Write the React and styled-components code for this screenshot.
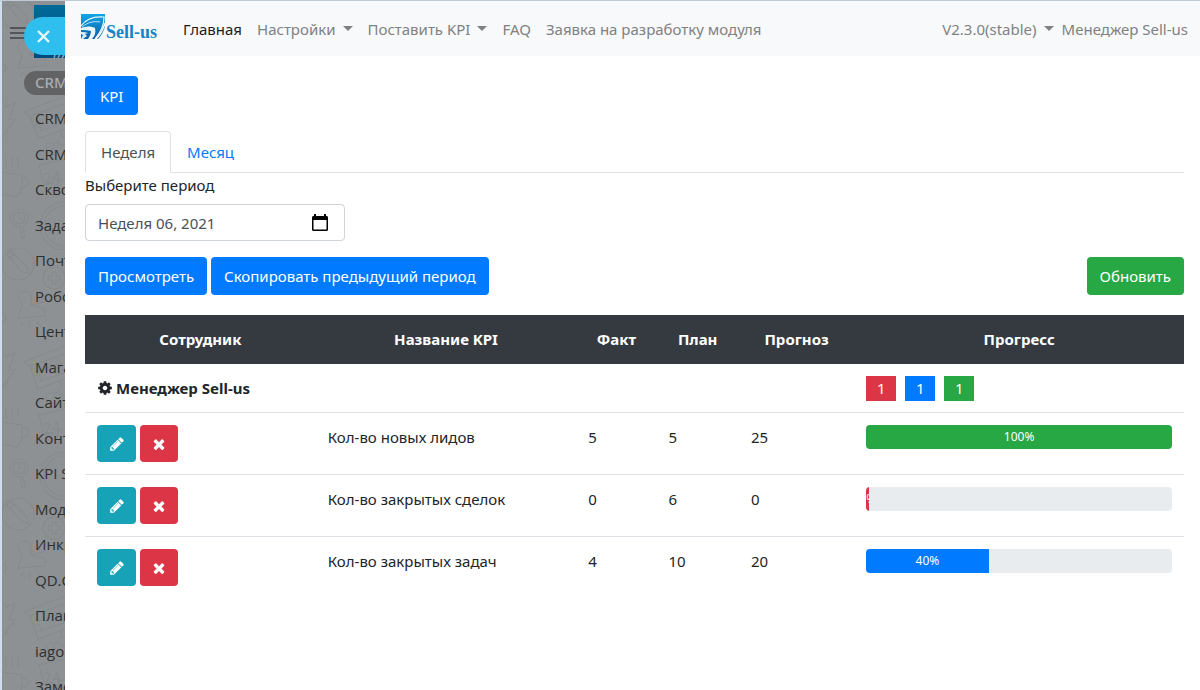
import React, { useState } from 'react';
import styled, { createGlobalStyle } from 'styled-components';

const GlobalStyle = createGlobalStyle`
    *, *::before, *::after {
        box-sizing: border-box;
    }
    body {
        margin: 0;
        font-family: 'Noto Sans', 'Open Sans', sans-serif;
        font-size: 15px;
        line-height: 24px;
        color: #212529;
        background: #fff;
    }
    button, input {
        font: inherit;
    }
    a {
        color: inherit;
        text-decoration: none;
    }
    ul {
        margin: 0;
        padding: 0;
        list-style: none;
    }
`

const colors = {
    primary: '#007bff',
    success: '#28a745',
    danger: '#dc3545',
    info: '#17a2b8',
}

const Page = styled.div`
    display: flex;
    height: 100vh;
    overflow: hidden;
    border-top: 1px solid #c0cad6;
`

/* ---------- left menu ---------- */

const Sidebar = styled.aside`
    position: relative;
    display: flex;
    flex-direction: column;
    flex: 0 0 65px;
    overflow: hidden;
    border-left: 2px solid #cfdeec;
    background: #8e9193;
    color: #2c2f31;
    white-space: nowrap;
`

const Doodles = styled.svg`
    position: absolute;
    inset: 0;
    width: 100%;
    height: 100%;
`

const SidebarHead = styled.div`
    position: relative;
    display: flex;
    align-items: flex-start;
    gap: 8px;
    height: 57px;
    padding: 4px 0 0 8px;
`

const MenuBtn = styled.button`
    flex: none;
    width: 16px;
    height: 12px;
    margin-top: 22px;
    padding: 0;
    border: solid #50565c;
    border-width: 2px 0;
    background: linear-gradient(#50565c, #50565c) center / 100% 2px no-repeat;
`

const CompanyTile = styled.div`
    display: flex;
    align-items: flex-end;
    flex: none;
    width: 120px;
    height: 53px;
    overflow: hidden;
    padding-left: 18px;
    background: linear-gradient(#006b99, #004a7c);
`

const CloseBtn = styled.button`
    position: absolute;
    top: 16px;
    left: 22px;
    width: 60px;
    height: 38px;
    padding: 0 0 0 13px;
    border: 0;
    border-radius: 19px 0 0 19px;
    background: #2fbfee;
    color: #e6f7fd;
    text-align: left;
    svg {
        display: block;
    }
`

const MenuActive = styled.a`
    position: relative;
    flex: none;
    width: 200px;
    height: 24px;
    margin: 13px 0 0 22px;
    padding-left: 11px;
    border-radius: 12px;
    background: #616364;
    color: #abadae;
    font-weight: 500;
    line-height: 23px;
`

const MenuList = styled.ul`
    position: relative;
    display: flex;
    flex: 1;
    flex-direction: column;
    justify-content: space-between;
    margin: 11px 0 -8px 33px;
    font-family: 'Open Sans', 'Noto Sans', sans-serif;
    font-size: 15px;
`

/* ---------- navbar ---------- */

const Panel = styled.div`
    flex: 1;
    min-width: 0;
    background: #fff;
`

const Navbar = styled.nav`
    display: flex;
    align-items: center;
    height: 55px;
    padding: 0 12px 0 16px;
    background: #f8f9fa;
    color: #808182;
    white-space: nowrap;
`

const Brand = styled.a`
    display: flex;
    align-items: flex-end;
    gap: 1px;
    margin-right: 26px;
    padding-bottom: 4px;
    color: #1583c5;
    font-family: 'Liberation Serif', serif;
    font-size: 18px;
    font-weight: 700;
    line-height: 13px;
`

const NavGroup = styled.div`
    display: flex;
    align-items: center;
    gap: ${props => props.$gap}px;
`

const NavLink = styled.a`
    color: ${props => props.$active ? '#1c1d1d' : 'inherit'};
`

const NavDrop = styled.button`
    display: flex;
    align-items: center;
    gap: 7px;
    padding: 0;
    border: 0;
    background: none;
    color: inherit;
    &::after {
        content: '';
        border: 5px solid transparent;
        border-top-color: currentColor;
        border-bottom: 0;
    }
`

const Spacer = styled.div`
    flex: 1;
`

/* ---------- content ---------- */

const Main = styled.main`
    padding: 20px 16px 20px 20px;
`

const Btn = styled.button`
    height: 38px;
    padding: 0 13px;
    border: 0;
    border-radius: 4px;
    background: ${props => colors[props.$color]};
    color: #fff;
    white-space: nowrap;
`

const KpiBtn = styled(Btn)`
    height: 39px;
    padding: 0 15px;
`

const Tabs = styled.div`
    display: flex;
    margin-top: 16px;
    border-bottom: 1px solid #dee2e6;
`

const Tab = styled.button`
    height: 42px;
    margin-bottom: -1px;
    padding: 0 15px;
    border: 1px solid transparent;
    border-radius: 4px 4px 0 0;
    background: none;
    color: ${colors.primary};
    ${props => props.$active && `
        border-color: #dee2e6 #dee2e6 #fff;
        background: #fff;
        color: #495057;
    `}
`

const PeriodLabel = styled.label`
    display: block;
    margin-bottom: 7px;
`

const PeriodField = styled.div`
    display: flex;
    align-items: center;
    width: 260px;
    height: 37px;
    padding: 0 16px 0 12px;
    border: 1px solid #ced4da;
    border-radius: 4px;
`

const PeriodInput = styled.input`
    flex: 1;
    min-width: 0;
    padding: 0;
    border: 0;
    outline: 0;
    background: none;
    color: #495057;
`

const IconBtn = styled.button`
    display: flex;
    padding: 0;
    border: 0;
    background: none;
    color: #000;
`

const Actions = styled.div`
    display: flex;
    gap: 4px;
    margin: 16px 0 20px;
`

const KpiTable = styled.table`
    width: 100%;
    table-layout: fixed;
    border-spacing: 0;
    th, td {
        padding: 12px;
        text-align: left;
        vertical-align: top;
    }
    thead th {
        height: 49px;
        background: #343a40;
        color: #fff;
        text-align: center;
    }
    tbody td {
        border-top: 1px solid #dee2e6;
    }
    tbody tr:first-child th,
    tbody tr:first-child td {
        height: 49px;
        padding-bottom: 11px;
        border-top: 0;
        border-bottom: 1px solid #dee2e6;
    }
    tbody tr:nth-child(2) td {
        border-top: 0;
    }
`

const Manager = styled.span`
    display: flex;
    align-items: center;
    gap: 3px;
`

const Badges = styled.div`
    display: flex;
    gap: 9px;
`

const Badge = styled.span`
    width: 30px;
    height: 25px;
    background: ${props => colors[props.$color]};
    color: #fff;
    text-align: center;
`

const RowActions = styled.div`
    display: flex;
    gap: 4px;
`

const RowBtn = styled(Btn)`
    display: flex;
    align-items: center;
    justify-content: center;
    width: ${props => props.$color === 'info' ? 39 : 38}px;
    height: 37px;
    padding: 0;
`

const Progress = styled.div`
    display: flex;
    height: 24px;
    overflow: hidden;
    border-radius: 4px;
    background: #e9ecef;
`

const ProgressBar = styled.div`
    display: flex;
    justify-content: center;
    overflow: hidden;
    background: ${props => colors[props.$color]};
    color: #fff;
    font-size: 12px;
`

const FA_PATHS = {
    cog: 'M1152 896q0-106-75-181t-181-75-181 75-75 181 75 181 181 75 181-75 75-181zm512-109v222q0 12-8 23t-20 13l-185 28q-19 54-39 91 35 50 107 138 10 12 10 25t-9 23q-27 37-99 108t-94 71q-12 0-26-9l-138-108q-44 23-91 38-16 136-29 186-7 28-36 28h-222q-14 0-24.5-8.5t-11.5-21.5l-28-184q-49-16-90-37l-141 107q-10 9-25 9-14 0-25-11-126-114-165-168-7-10-7-23 0-12 8-23 15-21 51-66.5t54-70.5q-27-50-41-99l-183-27q-13-2-21-12.5t-8-23.5v-222q0-12 8-23t19-13l186-28q14-46 39-92-40-57-107-138-10-12-10-24 0-10 9-23 26-36 98.5-107.5t94.5-71.5q13 0 26 10l138 107q44-23 91-38 16-136 29-186 7-28 36-28h222q14 0 24.5 8.5t11.5 21.5l28 184q49 16 90 37l142-107q9-9 24-9 13 0 25 10 129 119 165 170 7 8 7 22 0 12-8 23-15 21-51 66.5t-54 70.5q26 50 41 98l183 28q13 2 21 12.5t8 23.5z',
    pencil: 'M491 1536l91-91-235-235-91 91v107h128v128h107zm523-928q0-22-22-22-10 0-17 7l-542 542q-7 7-7 17 0 22 22 22 10 0 17-7l542-542q7-7 7-17zm-54-192l416 416-832 832h-416v-416zm683 96q0 53-37 90l-166 166-416-416 166-165q36-38 90-38 53 0 91 38l235 234q37 39 37 91z',
    times: 'M1490 1322q0 40-28 68l-136 136q-28 28-68 28t-68-28l-294-294-294 294q-28 28-68 28t-68-28l-136-136q-28-28-28-68t28-68l294-294-294-294q-28-28-28-68t28-68l136-136q28-28 68-28t68 28l294 294 294-294q28-28 68-28t68 28l136 136q28 28 28 68t-28 68l-294 294 294 294q28 28 28 68z',
}

function FaIcon({ name }) {
    return (
        <svg width="16" height="16" viewBox="0 0 1792 1792" fill="currentColor" aria-hidden="true">
            <path d={FA_PATHS[name]} />
        </svg>
    )
}

function LogoMark() {
    return (
        <svg width="24" height="25" viewBox="0 0 24 25" aria-hidden="true">
            <defs>
                <linearGradient id="logoFill" x1="0" y1="0" x2="0" y2="1">
                    <stop offset="0" stopColor="#12a5e6" />
                    <stop offset="1" stopColor="#0b5ea6" />
                </linearGradient>
            </defs>
            <path d="M0 0h24v25H0z" fill="url(#logoFill)" />
            <path d="M0 12C5 5 13 2 23 3c0 8-3 15-9 22" fill="none" stroke="#eaf6fc" strokeWidth="1.2" />
            <path d="M1 13c6-5 12-6 18-5" fill="none" stroke="#bfe4f6" strokeWidth="1" />
            <path d="M0 14c5-2 10-2 14 0 1 4 0 8-3 11H7c2-3 3-6 3-8-3-1-6-1-10-1z" fill="#eaf6fc" />
            <path d="M0 18c3 0 5 0 7 1l-3 1 2 2-4 3H0l2-4-2-1z" fill="#d5edf9" />
            <path d="M24 9C22 16 19 21 15 25" fill="none" stroke="#f8f9fa" strokeWidth="1.5" />
            <path d="M24 12v13h-7c3-3 6-8 7-13z" fill="#f8f9fa" />
        </svg>
    )
}

function SidebarPattern() {
    return (
        <Doodles aria-hidden="true">
            <defs>
                <pattern id="doodles" width="64" height="250" y="99" patternUnits="userSpaceOnUse">
                    <g fill="none" stroke="#868a8c" strokeWidth="1.2">
                        <path d="M22 12L62-4M22 12l6 4 40-14M28 16l8 23 30-11M34 22l26-9M38 31l24-8M32 26l5-2 3 8" />
                        <path d="M22 262l42-16M26 265l38-14" />
                        <circle cx="48" cy="47" r="4" />
                        <circle cx="60" cy="41" r="4" />
                        <path d="M52 44l5-2M58 30l2 7" />
                        <path d="M0 2l4 5 9-4-6 17 6-1-13 19" />
                        <path d="M3 58c3 4-1 6 2 11M9 57c3 4-1 6 2 11M15 57c3 4-1 6 2 11" />
                        <path d="M0 72l20 3c1 11-1 19-6 22l-14-3M20 78c9-2 9 10-2 10" />
                        <path d="M64 59l-27 6 5 20 9-2 3 6 3-8 7-2" />
                        <circle cx="17" cy="118" r="9" />
                        <circle cx="17" cy="118" r="6" />
                        <path d="M17 113v5l4 1M18 127l2 11 3-1-2-10" />
                        <circle cx="62" cy="126" r="24" />
                        <circle cx="62" cy="126" r="20" />
                        <circle cx="16" cy="164" r="16" />
                        <path d="M5 155l4-4 16 16 1 6-6-1zM8 158l4-4" />
                        <circle cx="52" cy="178" r="11" />
                        <path d="M50 172h4v4h4v4h-4v4h-4v-4h-4v-4h4z" />
                        <path d="M16 197c1-8 13-7 13 0v8l14 4v7l-27 2c1-6 4-8 4-13zM29 205c5 0 10-4 14-3M21 222l-3 5M28 222l-1 7M35 221l4 6" />
                        <circle cx="0" cy="218" r="4" />
                    </g>
                </pattern>
            </defs>
            <rect width="100%" height="100%" fill="url(#doodles)" />
            {[183, 433, 683].map((y) => (
                <text key={y} x="42" y={y} fontSize="15" fill="#868a8c" transform={`rotate(-8 42 ${y})`}>24</text>
            ))}
        </Doodles>
    )
}

const menuItems = [
    'CRM', 'CRM', 'Скво', 'Зада', 'Почт', 'Робо', 'Цент', 'Мага', 'Сайт',
    'Конт', 'KPI S', 'Мод', 'Инкр', 'QD.C', 'План', 'iago', 'Заме',
]

const rows = [
    { name: 'Кол-во новых лидов', fact: 5, plan: 5, forecast: 25, percent: 100, color: 'success' },
    { name: 'Кол-во закрытых сделок', fact: 0, plan: 6, forecast: 0, percent: 0, color: 'danger' },
    { name: 'Кол-во закрытых задач', fact: 4, plan: 10, forecast: 20, percent: 40, color: 'primary' },
]

const columns = [
    ['Сотрудник', '21%'],
    ['Название KPI', '23.7%'],
    ['Факт', '7.3%'],
    ['План', '7.5%'],
    ['Прогноз', '10.5%'],
    ['Прогресс', '30%'],
]

function KpiRow({ row }) {
    return (
        <tr>
            <td>
                <RowActions>
                    <RowBtn $color="info" aria-label="Редактировать"><FaIcon name="pencil" /></RowBtn>
                    <RowBtn $color="danger" aria-label="Удалить"><FaIcon name="times" /></RowBtn>
                </RowActions>
            </td>
            <td>{row.name}</td>
            <td>{row.fact}</td>
            <td>{row.plan}</td>
            <td>{row.forecast}</td>
            <td>
                <Progress>
                    {/* пустая полоса всё равно видна на 1% */}
                    <ProgressBar $color={row.color} style={{ width: `${Math.max(row.percent, 1)}%` }}>
                        {row.percent}%
                    </ProgressBar>
                </Progress>
            </td>
        </tr>
    )
}

function App() {
    const [tab, setTab] = useState('Неделя')
    const [period, setPeriod] = useState('Неделя 06, 2021')

    return (
        <Page>
            <GlobalStyle />
            <Sidebar>
                <SidebarPattern />
                <SidebarHead>
                    <MenuBtn aria-label="Меню" />
                    <CompanyTile>
                        <svg width="40" height="6" viewBox="0 0 40 6" aria-hidden="true">
                            <path d="M3 3l-1 3M8 2l-2 4M12 3l-2 3" stroke="#8fa3ae" strokeWidth="1.5" />
                        </svg>
                    </CompanyTile>
                </SidebarHead>
                <MenuActive href="#">CRM</MenuActive>
                <MenuList>
                    {menuItems.map((item, i) => (
                        <li key={i}><a href="#">{item}</a></li>
                    ))}
                </MenuList>
                <CloseBtn aria-label="Закрыть">
                    <svg width="13" height="13" viewBox="0 0 13 13" stroke="currentColor" strokeWidth="2.4" aria-hidden="true">
                        <path d="M1 1l11 11M12 1L1 12" />
                    </svg>
                </CloseBtn>
            </Sidebar>
            <Panel>
                <Navbar>
                    <Brand href="#">
                        <LogoMark />
                        Sell-us
                    </Brand>
                    <NavGroup $gap={15}>
                        <NavLink href="#" $active>Главная</NavLink>
                        <NavDrop>Настройки</NavDrop>
                        <NavDrop>Поставить KPI</NavDrop>
                        <NavLink href="#">FAQ</NavLink>
                        <NavLink href="#">Заявка на разработку модуля</NavLink>
                    </NavGroup>
                    <Spacer />
                    <NavGroup $gap={8}>
                        <NavDrop>V2.3.0(stable)</NavDrop>
                        <NavLink href="#">Менеджер Sell-us</NavLink>
                    </NavGroup>
                </Navbar>
                <Main>
                    <KpiBtn $color="primary">KPI</KpiBtn>
                    <Tabs role="tablist">
                        {['Неделя', 'Месяц'].map((name) => (
                            <Tab
                                key={name}
                                role="tab"
                                aria-selected={tab === name}
                                $active={tab === name}
                                onClick={() => setTab(name)}>{name}</Tab>
                        ))}
                    </Tabs>
                    <PeriodLabel htmlFor="period">Выберите период</PeriodLabel>
                    <PeriodField>
                        <PeriodInput id="period" value={period} onChange={(e) => setPeriod(e.target.value)} />
                        <IconBtn aria-label="Календарь">
                            <svg width="16" height="18" viewBox="0 0 16 18" aria-hidden="true">
                                <path d="M2 0h2v2h8V0h2v2h1l1 1v13l-1 1H1l-1-1V3l1-1h1zM1.500 6v9.500h13V6z" fill="currentColor" fillRule="evenodd" />
                            </svg>
                        </IconBtn>
                    </PeriodField>
                    <Actions>
                        <Btn $color="primary">Просмотреть</Btn>
                        <Btn $color="primary">Скопировать предыдущий период</Btn>
                        <Spacer />
                        <Btn $color="success">Обновить</Btn>
                    </Actions>
                    <KpiTable>
                        <colgroup>
                            {columns.map(([title, width]) => <col key={title} width={width} />)}
                        </colgroup>
                        <thead>
                            <tr>
                                {columns.map(([title]) => <th key={title}>{title}</th>)}
                            </tr>
                        </thead>
                        <tbody>
                            <tr>
                                <th colSpan={5}>
                                    <Manager><FaIcon name="cog" />Менеджер Sell-us</Manager>
                                </th>
                                <td>
                                    <Badges>
                                        <Badge $color="danger">1</Badge>
                                        <Badge $color="primary">1</Badge>
                                        <Badge $color="success">1</Badge>
                                    </Badges>
                                </td>
                            </tr>
                            {rows.map((row) => <KpiRow key={row.name} row={row} />)}
                        </tbody>
                    </KpiTable>
                </Main>
            </Panel>
        </Page>
    )
}

export default App;
